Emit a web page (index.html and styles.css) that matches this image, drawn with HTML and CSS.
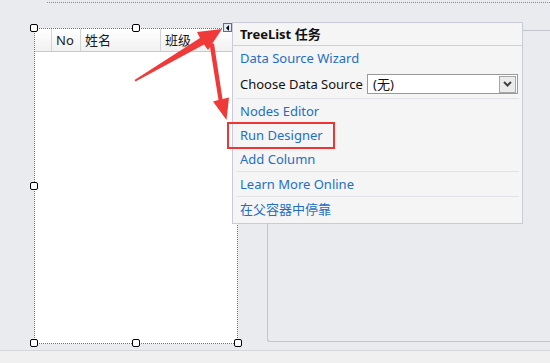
FILE: index.html
```html
<!DOCTYPE html>
<html lang="zh-cn">
<head>
    <meta charset="UTF-8">
    <title>TreeList 任务</title>
    <link rel="stylesheet" href="styles.css">
</head>
<body>
    <div class="designer">
        <div class="top-guide"></div>
        <div class="groupbox"></div>

        <div class="treelist">
            <div class="tl-header">
                <div class="tl-cell"></div>
                <div class="tl-cell">No</div>
                <div class="tl-cell">姓名</div>
                <div class="tl-cell last">班级</div>
            </div>
        </div>

        <span class="handle h-tl"></span>
        <span class="handle h-tm"></span>
        <span class="handle h-ml"></span>
        <span class="handle h-bl"></span>
        <span class="handle h-bm"></span>
        <span class="handle h-br"></span>

        <div class="smart-tag"><span class="tri"></span></div>

        <div class="tasks">
            <div class="tasks-title">TreeList 任务</div>
            <div class="tasks-body">
                <a class="item">Data Source Wizard</a>
                <div class="item choose">
                    <span class="label">Choose Data Source</span>
                    <div class="combo">
                        <span class="combo-text">(无)</span>
                        <span class="combo-btn">
                            <svg width="9" height="6" viewBox="0 0 9 6"><path d="M1 1 L4.5 4.5 L8 1" fill="none" stroke="#444" stroke-width="2"/></svg>
                        </span>
                    </div>
                </div>
                <div class="sep"></div>
                <a class="item">Nodes Editor</a>
                <a class="item">Run Designer</a>
                <a class="item">Add Column</a>
                <div class="sep"></div>
                <a class="item">Learn More Online</a>
                <div class="sep"></div>
                <a class="item">在父容器中停靠</a>
            </div>
        </div>

        <div class="mark-box"></div>

        <svg class="arrows" width="550" height="350" viewBox="0 0 550 350">
            <polygon fill="#f03a3a" points="134.5,80 200,38 197,32 222,29 208,50 204,44.5 135.5,81.5"/>
            <polygon fill="#f03a3a" points="209.5,44 214,43.5 222.5,99 229,97.5 226.5,120 213,101.5 218.5,100"/>
        </svg>
    </div>
    <div class="statusbar"></div>
</body>
</html>
```

FILE: styles.css
```css
body {
    margin: 0;
    width: 550px;
    height: 363px;
    overflow: hidden;
    background-color: #eaebef;
    font-family: "Noto Sans", "Noto Sans CJK SC", sans-serif;
    font-size: 13px;
}
.designer {
    position: relative;
    height: 350px;
    overflow: hidden;
}
.statusbar {
    height: 12px;
    background: #f0f0f0;
    border-top: 1px solid #d6d6d8;
}
.top-guide {
    position: absolute;
    left: 47px;
    right: 0;
    top: 2px;
    border-top: 1px dotted #8a8a8a;
}
.groupbox {
    position: absolute;
    left: 267px;
    right: 0;
    top: 30px;
    height: 310px;
    border: 1px solid #c3c5cd;
    border-right: none;
    border-radius: 3px 0 0 3px;
}
.treelist {
    position: absolute;
    left: 34px;
    top: 28px;
    width: 202px;
    height: 314px;
    border: 1px dotted #6e6e6e;
    background: white;
}
.tl-header {
    display: grid;
    grid-template-columns: 17px 29px 80px 1fr;
    height: 22px;
    border-bottom: 1px solid #c9c9c9;
    background: linear-gradient(#ffffff, #f1f1f1);
    font-size: 13px;
    color: #1a1a1a;
}
.tl-cell {
    border-right: 1px solid #d4d4d4;
    padding-left: 4px;
    line-height: 22px;
}
.tl-cell.last {
    border-right: none;
}
.handle {
    position: absolute;
    width: 6px;
    height: 6px;
    border: 1px solid #000;
    border-radius: 2px;
    background: white;
}
.h-tl { left: 30px; top: 24px; }
.h-tm { left: 132px; top: 24px; }
.h-ml { left: 30px; top: 182px; }
.h-bl { left: 30px; top: 339px; }
.h-bm { left: 132px; top: 339px; }
.h-br { left: 234px; top: 339px; }
.smart-tag {
    position: absolute;
    left: 223px;
    top: 23px;
    width: 7px;
    height: 7px;
    border: 1px solid #5f6f86;
    background: #dfe7f1;
    display: flex;
    align-items: center;
    justify-content: center;
}
.tri {
    width: 0;
    height: 0;
    border-top: 3px solid transparent;
    border-bottom: 3px solid transparent;
    border-right: 3px solid #000;
}
.tasks {
    position: absolute;
    left: 232px;
    top: 22px;
    width: 289px;
    height: 200px;
    border: 1px solid #c9cbd8;
    background: #f5f5f5;
}
.tasks-title {
    height: 22px;
    line-height: 22px;
    padding-left: 7px;
    font-weight: bold;
    color: #111;
    border-bottom: 1px solid #cfd2de;
}
.tasks-body {
    padding: 0 3px;
    display: flex;
    flex-direction: column;
}
.item {
    height: 24px;
    line-height: 24px;
    padding-left: 4px;
    color: #1f6fc4;
}
.item.choose {
    height: 28px;
    display: flex;
    align-items: center;
    color: #111;
}
.label {
    flex: 1;
}
.combo {
    width: 149px;
    height: 18px;
    margin-right: 1px;
    border: 1px solid #9a9a9a;
    background: white;
    display: flex;
    align-items: center;
    justify-content: space-between;
    color: #111;
}
.combo-text {
    padding-left: 5px;
    line-height: 18px;
}
.combo-btn {
    width: 15px;
    height: 15px;
    margin-right: 1px;
    border: 1px solid #a6a6a6;
    background: #ebebeb;
    display: flex;
    align-items: center;
    justify-content: center;
}
.sep {
    height: 1px;
    background: #e2e2e6;
}
.mark-box {
    position: absolute;
    left: 227px;
    top: 122px;
    width: 104px;
    height: 23px;
    border: 2px solid #ee3535;
}
.arrows {
    position: absolute;
    left: 0;
    top: 0;
}
```
